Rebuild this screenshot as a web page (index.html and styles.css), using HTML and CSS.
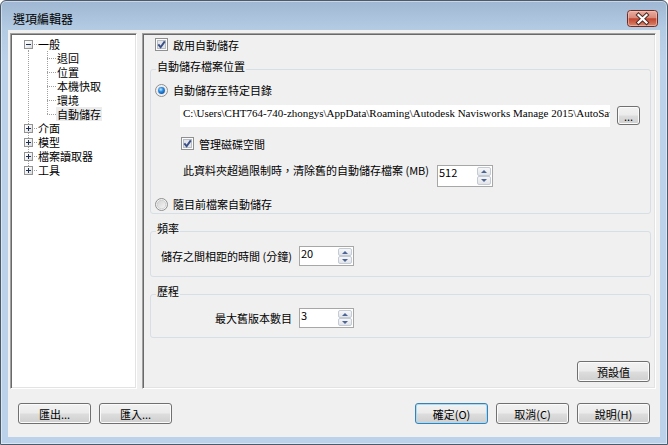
FILE: index.html
```html
<!DOCTYPE html>
<html lang="zh-Hant">
<head>
<meta charset="utf-8">
<title>選項編輯器</title>
<link rel="stylesheet" href="styles.css">
</head>
<body>
<div class="window">
  <div class="titlebar">
    <div class="title">選項編輯器</div>
    <div class="close">
      <svg width="31" height="17" viewBox="0 0 31 17">
        <defs>
          <linearGradient id="cg" x1="0" y1="0" x2="0" y2="1">
            <stop offset="0" stop-color="#eab0a3"/>
            <stop offset="0.45" stop-color="#d88a7a"/>
            <stop offset="0.52" stop-color="#c2452f"/>
            <stop offset="1" stop-color="#db8a70"/>
          </linearGradient>
        </defs>
        <rect x="0.5" y="0.5" width="30" height="16" rx="3" fill="url(#cg)" stroke="#6e2c24"/>
        <rect x="1.5" y="1.5" width="28" height="14" rx="2" fill="none" stroke="#f3c9bf" stroke-opacity="0.6"/>
        <path d="M11.5 5 L19.5 12.5 M19.5 5 L11.5 12.5" stroke="#4d2a25" stroke-width="4.2" stroke-linecap="square"/>
        <path d="M11.5 5 L19.5 12.5 M19.5 5 L11.5 12.5" stroke="#ffffff" stroke-width="2.2" stroke-linecap="square"/>
      </svg>
    </div>
  </div>
  <div class="client">
    <div class="main">
      <div class="tree sunken">
        <div class="row"><span class="cell first"><span class="box"><svg width="7" height="7" viewBox="0 0 7 7"><path d="M1 3.5h5" stroke="#1f2f4f" stroke-width="1"/></svg></span></span><span class="label">一般</span></div>
        <div class="row"><span class="cell pass"></span><span class="cell tee"></span><span class="label">退回</span></div>
        <div class="row"><span class="cell pass"></span><span class="cell tee"></span><span class="label">位置</span></div>
        <div class="row"><span class="cell pass"></span><span class="cell tee"></span><span class="label">本機快取</span></div>
        <div class="row"><span class="cell pass"></span><span class="cell tee"></span><span class="label">環境</span></div>
        <div class="row"><span class="cell pass"></span><span class="cell elbow"></span><span class="label selected">自動儲存</span></div>
        <div class="row"><span class="cell mid"><span class="box"><svg width="7" height="7" viewBox="0 0 7 7"><path d="M1 3.5h5M3.5 1v5" stroke="#1f2f4f" stroke-width="1"/></svg></span></span><span class="label">介面</span></div>
        <div class="row"><span class="cell mid"><span class="box"><svg width="7" height="7" viewBox="0 0 7 7"><path d="M1 3.5h5M3.5 1v5" stroke="#1f2f4f" stroke-width="1"/></svg></span></span><span class="label">模型</span></div>
        <div class="row"><span class="cell mid"><span class="box"><svg width="7" height="7" viewBox="0 0 7 7"><path d="M1 3.5h5M3.5 1v5" stroke="#1f2f4f" stroke-width="1"/></svg></span></span><span class="label">檔案讀取器</span></div>
        <div class="row"><span class="cell last"><span class="box"><svg width="7" height="7" viewBox="0 0 7 7"><path d="M1 3.5h5M3.5 1v5" stroke="#1f2f4f" stroke-width="1"/></svg></span></span><span class="label">工具</span></div>
      </div>

      <div class="panel sunken">
        <div class="opt-row top-check">
          <svg class="cb" width="13" height="13" viewBox="0 0 13 13"><rect x="0.5" y="0.5" width="12" height="12" fill="#fbfbfb" stroke="#8e8f8f"/><rect x="2.5" y="2.5" width="8" height="8" fill="#e2e5e9" stroke="#b8bdc4"/><path d="M3.3 6.4 L5.6 9.2 L9.8 3.4" fill="none" stroke="#3a4f88" stroke-width="1.9"/></svg>
          <span>啟用自動儲存</span>
        </div>

        <fieldset class="group g1">
          <legend>自動儲存檔案位置</legend>
          <div class="opt-row radio1">
            <svg width="13" height="13" viewBox="0 0 13 13"><defs><radialGradient id="rb" cx="0.4" cy="0.35" r="0.7"><stop offset="0" stop-color="#c6ecff"/><stop offset="0.45" stop-color="#2e8fe3"/><stop offset="1" stop-color="#11509e"/></radialGradient></defs><circle cx="6.5" cy="6.5" r="6" fill="#f2f2f2" stroke="#8e8f8f"/><circle cx="6.5" cy="6.5" r="4.3" fill="#dfe3e8"/><circle cx="6.5" cy="6.5" r="3.4" fill="url(#rb)"/></svg>
            <span>自動儲存至特定目錄</span>
          </div>
          <div class="path-row">
            <div class="path">C:\Users\CHT764-740-zhongys\AppData\Roaming\Autodesk Navisworks Manage 2015\AutoSave\</div>
            <button class="btn small">...</button>
          </div>
          <div class="opt-row check2">
            <svg class="cb" width="13" height="13" viewBox="0 0 13 13"><rect x="0.5" y="0.5" width="12" height="12" fill="#fbfbfb" stroke="#8e8f8f"/><rect x="2.5" y="2.5" width="8" height="8" fill="#e2e5e9" stroke="#b8bdc4"/><path d="M3.3 6.4 L5.6 9.2 L9.8 3.4" fill="none" stroke="#3a4f88" stroke-width="1.9"/></svg>
            <span>管理磁碟空間</span>
          </div>
          <div class="limit-row">
            <span class="limit-label">此資料夾超過限制時，清除舊的自動儲存檔案 (MB)</span>
            <div class="spin tall">
              <span class="spin-val">512</span>
              <span class="spin-btns"><span class="sb"><i class="up"></i></span><span class="sb"><i class="down"></i></span></span>
            </div>
          </div>
          <div class="opt-row radio2">
            <svg width="13" height="13" viewBox="0 0 13 13"><defs><linearGradient id="ro" x1="0" y1="0" x2="1" y2="1"><stop offset="0" stop-color="#d0d0d0"/><stop offset="1" stop-color="#f8f8f8"/></linearGradient></defs><circle cx="6.5" cy="6.5" r="6" fill="#f4f4f4" stroke="#8e8f8f"/><circle cx="6.5" cy="6.5" r="4.3" fill="url(#ro)" stroke="#c9c9c9" stroke-width="0.8"/></svg>
            <span>隨目前檔案自動儲存</span>
          </div>
        </fieldset>

        <fieldset class="group g2">
          <legend>頻率</legend>
          <div class="field-row">
            <span class="field-label">儲存之間相距的時間 (分鐘)</span>
            <div class="spin">
              <span class="spin-val">20</span>
              <span class="spin-btns"><span class="sb"><i class="up"></i></span><span class="sb"><i class="down"></i></span></span>
            </div>
          </div>
        </fieldset>

        <fieldset class="group g3">
          <legend>歷程</legend>
          <div class="field-row">
            <span class="field-label">最大舊版本數目</span>
            <div class="spin">
              <span class="spin-val">3</span>
              <span class="spin-btns"><span class="sb"><i class="up"></i></span><span class="sb"><i class="down"></i></span></span>
            </div>
          </div>
        </fieldset>

        <button class="btn defaults">預設值</button>
      </div>
    </div>

    <div class="buttons">
      <button class="btn">匯出...</button>
      <button class="btn">匯入...</button>
      <span class="spacer"></span>
      <button class="btn default">確定(O)</button>
      <button class="btn">取消(C)</button>
      <button class="btn">說明(H)</button>
    </div>
  </div>
</div>
</body>
</html>
```

FILE: styles.css
```css
* { box-sizing: border-box; }
html, body { margin: 0; padding: 0; }
body {
  width: 668px;
  height: 445px;
  overflow: hidden;
  background: #ffffff;
  font-family: "Noto Sans CJK TC", "Noto Sans CJK SC", "Liberation Sans", sans-serif;
  font-size: 11px;
  line-height: 14px;
  color: #000;
}

.window {
  width: 668px;
  height: 445px;
  display: flex;
  flex-direction: column;
  padding: 0 7px 7px 7px;
  border: 1px solid #4c5a6a;
  border-radius: 6px 6px 0 0;
  background: linear-gradient(to bottom, #9fb7d2 0px, #b4cbe4 28px, #bcd2ea 60px, #bcd2ea 100%);
  box-shadow: inset 0 0 0 1px rgba(255, 255, 255, 0.45);
}

.titlebar {
  height: 29px;
  flex: none;
  display: flex;
  align-items: flex-start;
  justify-content: space-between;
}
.title {
  font-size: 12px;
  line-height: 14px;
  margin: 11px 0 0 5px;
}
.close {
  width: 31px;
  height: 17px;
  margin: 9px 2px 0 0;
  display: flex;
}

.client {
  flex: 1;
  display: flex;
  flex-direction: column;
  background: #f0f0f0;
  padding: 3px 4px 0 2px;
}

.main {
  display: flex;
  gap: 5px;
  height: 356px;
  flex: none;
}

.sunken {
  border: 1px solid;
  border-color: #a0a0a0 #ffffff #ffffff #a0a0a0;
  box-shadow: inset 1px 1px 0 #696969, inset -1px -1px 0 #e3e3e3;
}

/* tree */
.tree {
  width: 127px;
  background: #ffffff;
  padding: 3px 0 0 8px;
  --dv: repeating-linear-gradient(to bottom, #a0a0a0 0 1px, transparent 1px 2px);
  --dh: repeating-linear-gradient(to right, #a0a0a0 0 1px, transparent 1px 2px);
}
.row {
  display: flex;
  height: 14px;
}
.cell {
  width: 19px;
  height: 14px;
  flex: none;
  display: flex;
  align-items: flex-start;
}
.cell.first {
  background: var(--dh) 9px 7px / 10px 1px no-repeat, var(--dv) 9px 7px / 1px 7px no-repeat;
}
.cell.mid, .cell.tee {
  background: var(--dh) 9px 7px / 10px 1px no-repeat, var(--dv) 9px 0 / 1px 14px no-repeat;
}
.cell.last, .cell.elbow {
  background: var(--dh) 9px 7px / 10px 1px no-repeat, var(--dv) 9px 0 / 1px 8px no-repeat;
}
.cell.pass {
  background: var(--dv) 9px 0 / 1px 14px no-repeat;
}
.box {
  width: 9px;
  height: 9px;
  margin: 3px 0 0 5px;
  border: 1px solid #939393;
  background: linear-gradient(135deg, #ffffff 0%, #f2f2f2 50%, #d9d9d9 100%);
  display: flex;
  align-items: center;
  justify-content: center;
}
.box svg { display: block; }
.label {
  white-space: nowrap;
  line-height: 14px;
  padding: 0 1px;
  margin-left: -1px;
}
.label.selected {
  background: #ececec;
}

/* right panel */
.panel {
  width: 514px;
  display: flex;
  flex-direction: column;
  padding: 4px 4px 6px 7px;
}
.opt-row {
  display: flex;
  align-items: center;
  gap: 5px;
  height: 14px;
  white-space: nowrap;
}
.opt-row svg { display: block; flex: none; }
.top-check { margin-left: 5px; height: 13px; }

.group {
  margin: 0;
  padding: 0 0 2px 0;
  border: 1px solid #d5dfe5;
  border-radius: 3px;
  min-width: 0;
}
.group legend {
  padding: 0 1px 6px 1px;
  margin-left: 5px;
  line-height: 14px;
}
.g1 { margin-top: 8px; }
.g2 { margin-top: 7px; padding-bottom: 10px; }
.g3 { margin-top: 7px; padding-bottom: 9px; }

.radio1 { margin: 4px 0 0 4px; }
.path-row {
  display: flex;
  align-items: flex-start;
  margin: 8px 0 0 29px;
}
.path {
  width: 430px;
  height: 22px;
  background: #ffffff;
  padding: 1px 2px 0 3px;
  overflow: hidden;
  white-space: nowrap;
  font-family: "Liberation Serif", serif;
  font-size: 11px;
  line-height: 14px;
}
.check2 { margin: 10px 0 0 30px; height: 13px; }
.limit-row {
  display: flex;
  align-items: flex-start;
  margin: 15px 0 0 32px;
}
.limit-label {
  width: 254px;
  margin-top: -2px;
  white-space: nowrap;
}
.radio2 { margin: 10px 0 0 4px; }

.field-row {
  display: flex;
  align-items: center;
  margin-top: 5px;
}
.g3 .field-row { margin-top: 4px; }
.field-label {
  width: 141px;
  text-align: right;
  white-space: nowrap;
}
.field-row .spin { margin-left: 7px; }

/* spin box */
.spin {
  width: 55px;
  height: 20px;
  flex: none;
  display: flex;
  border: 1px solid #a7a7a7;
  background: #ffffff;
}
.spin.tall { height: 22px; width: 56px; }
.spin-val {
  flex: 1;
  padding: 0 0 0 1px;
  line-height: 13px;
}
.spin-btns {
  width: 15px;
  display: flex;
  flex-direction: column;
  padding: 1px 1px 1px 0;
}
.sb {
  flex: 1;
  border: 1px solid #c3cbd6;
  border-radius: 2px;
  background: linear-gradient(to bottom, #f7f7f7, #e2e4e8);
  display: flex;
  align-items: center;
  justify-content: center;
}
.sb i {
  width: 0;
  height: 0;
  border-left: 3px solid transparent;
  border-right: 3px solid transparent;
}
.sb i.up { border-bottom: 3px solid #4c6596; }
.sb i.down { border-top: 3px solid #4c6596; }

/* buttons */
.btn {
  width: 73px;
  height: 21px;
  flex: none;
  padding: 0;
  border: 1px solid #707070;
  border-radius: 3px;
  background: linear-gradient(to bottom, #f2f2f2 0%, #ebebeb 48%, #dddddd 52%, #cfcfcf 100%);
  box-shadow: inset 0 0 0 1px #fbfbfb;
  font-family: inherit;
  font-size: 11px;
  line-height: 14px;
  color: #000;
}
.btn.small {
  width: 23px;
  height: 19px;
  margin: 1px 0 0 7px;
  line-height: 12px;
}
.btn.default {
  border-color: #3c7fb1;
  box-shadow: inset 0 0 0 1px #a6dcf6;
}
.btn.defaults {
  margin-top: auto;
  align-self: flex-end;
  margin-right: 1px;
}

.buttons {
  display: flex;
  gap: 8px;
  margin-top: 14px;
  padding: 0 6px 0 8px;
}
.spacer { flex: 1; }
```
